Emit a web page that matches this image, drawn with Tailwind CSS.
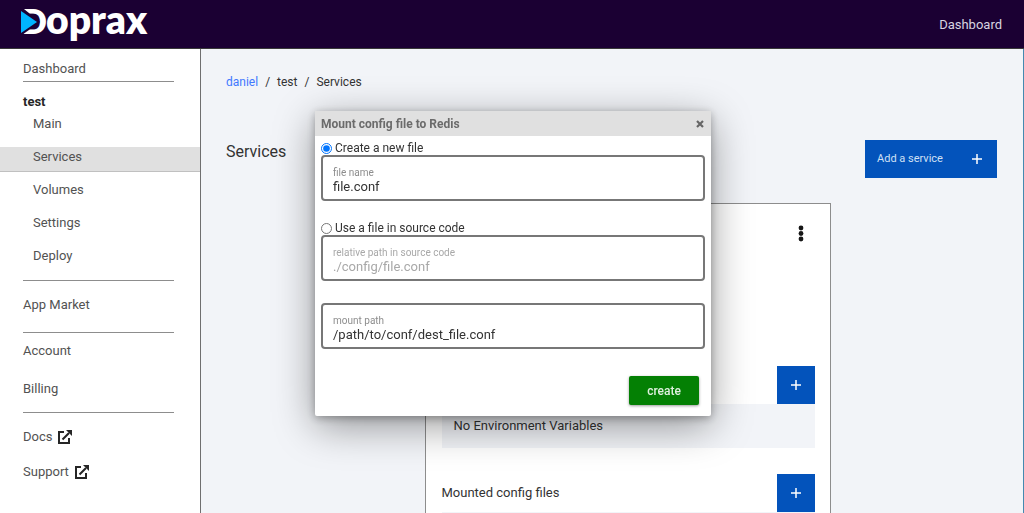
<!DOCTYPE html>
<html lang="en">

<head>
    <meta charset="UTF-8">
    <meta name="viewport" content="width=device-width, initial-scale=1.0">
    <title>Services - Doprax</title>
    <script src="https://cdn.jsdelivr.net/npm/@tailwindcss/browser@4"></script>
</head>

<body class="h-screen flex flex-col overflow-hidden bg-[#f2f4f8] font-[Roboto,sans-serif] text-[13px] text-[#333]">
    <!-- Header -->
    <header class="h-[49px] shrink-0 flex items-center justify-between bg-[#1b0033] border-b border-[#393939] pl-5 pr-[22px]">
        <a href="#" aria-label="Doprax">
            <svg class="w-36 h-12 overflow-visible" viewBox="0 0 144 48" fill="#fff" font-family="Lato, sans-serif" font-weight="800">
                <text x="1" y="34" font-size="34">D</text>
                <text x="26" y="34" font-size="39">oprax</text>
                <path d="M0 9v26h2l18-13L4 9z" fill="#1b0033" />
                <path d="M1 11v22l16-11z" fill="#00b4ff" />
            </svg>
        </a>
        <a href="#" class="mt-0.5 text-[#d8d4e0]">Dashboard</a>
    </header>

    <div class="flex flex-1 min-h-0">
        <!-- Sidebar -->
        <nav class="w-[201px] shrink-0 bg-white border-r border-[#6f6f6f] text-[#525252] leading-6">
            <a href="#" class="block mt-2 ml-[23px] mr-[26px] border-b border-[#8d8d8d]">Dashboard</a>
            <a href="#" class="block mt-2 px-[23px] font-bold text-[#262626]">test</a>
            <ul class="flex flex-col gap-2">
                <li><a href="#" class="block pl-[33px] h-[29px] -mt-1 pt-1 leading-5">Main</a></li>
                <li><a href="#" class="block pl-[33px] h-[25px] leading-5 bg-[#e0e0e0] border-b border-[#c0c0c0]">Services</a></li>
                <li><a href="#" class="block pl-[33px] h-[25px] leading-5">Volumes</a></li>
                <li><a href="#" class="block pl-[33px] h-[25px] leading-5">Settings</a></li>
                <li><a href="#" class="block pl-[33px] h-[25px] leading-5">Deploy</a></li>
            </ul>
            <div class="ml-[23px] mr-[26px]">
                <a href="#" class="block mt-[9px] py-3 border-t border-[#8d8d8d]">App Market</a>
                <div class="mt-[3px] pt-1.5 pb-[11px] border-y border-[#8d8d8d] flex flex-col gap-3.5">
                    <a href="#">Account</a>
                    <a href="#">Billing</a>
                </div>
                <div class="pt-3 flex flex-col gap-[11px]">
                    <a href="#" class="flex items-center gap-1.5">Docs
                        <svg class="size-3.5" viewBox="0 0 14 14" fill="none" stroke="#262626" stroke-width="2"><path d="M6 2H1v11h10V8M4.500 9.500L11 3" /><path d="M8 0h6v6z" fill="#262626" stroke="none" /></svg>
                    </a>
                    <a href="#" class="flex items-center gap-1.5">Support
                        <svg class="size-3.5" viewBox="0 0 14 14" fill="none" stroke="#262626" stroke-width="2"><path d="M6 2H1v11h10V8M4.500 9.500L11 3" /><path d="M8 0h6v6z" fill="#262626" stroke="none" /></svg>
                    </a>
                </div>
            </div>
        </nav>

        <!-- Main content -->
        <main class="flex-1 min-w-0 pl-[25px] pr-[26px] pt-[23px] border-r border-[#4589b0]">
            <div class="flex gap-[7px] text-xs leading-5">
                <a href="#" class="text-[#4178ff]">daniel</a><span>/</span><span>test</span><span>/</span><span>Services</span>
            </div>

            <div class="flex justify-between items-start mt-12">
                <h1 class="text-base leading-6">Services</h1>
                <button class="w-[132px] h-[38px] px-3 flex items-center justify-between bg-[#0353bb] text-[#d0e0f5] text-[11px]">
                    Add a service
                    <svg class="size-4" viewBox="0 0 16 16" stroke="#fff" stroke-width="1.500"><path d="M8 3v10M3 8h10" /></svg>
                </button>
            </div>

            <div class="flex justify-center pl-8 mt-[25px]">
                <section class="w-[406px] h-96 bg-white border border-[#8d8d8d] pl-4 pr-[15px]">
                    <div class="flex justify-end pt-5 h-[162px]">
                        <button aria-label="Service options" class="size-5 mr-1">
                            <svg class="size-5" viewBox="0 0 20 20" fill="#161616"><circle cx="10" cy="4" r="2.400" /><circle cx="10" cy="9.500" r="2.400" /><circle cx="10" cy="15" r="2.400" /></svg>
                        </button>
                    </div>
                    <div class="flex items-center justify-between">
                        <h2>Environment Variables</h2>
                        <button aria-label="Add environment variable" class="size-[38px] grid place-items-center bg-[#0353bb]">
                            <svg class="size-4" viewBox="0 0 16 16" stroke="#fff" stroke-width="1.500"><path d="M8 3v10M3 8h10" /></svg>
                        </button>
                    </div>
                    <p class="h-11 px-3 leading-[44px] bg-[#f2f4f8]">No Environment Variables</p>
                    <div class="flex items-center justify-between mt-[26px]">
                        <h2>Mounted config files</h2>
                        <button aria-label="Add config file" class="size-[38px] grid place-items-center bg-[#0353bb]">
                            <svg class="size-4" viewBox="0 0 16 16" stroke="#fff" stroke-width="1.500"><path d="M8 3v10M3 8h10" /></svg>
                        </button>
                    </div>
                    <div class="h-11 bg-[#f2f4f8]"></div>
                </section>
            </div>
        </main>
    </div>

    <!-- Mount config dialog -->
    <div class="fixed inset-x-0 top-[111px] pl-0.5 flex justify-center">
        <form role="dialog" aria-labelledby="dialogTitle" class="w-[396px] bg-white rounded-xs shadow-[0_10px_40px_rgba(0,0,0,0.4),0_2px_8px_rgba(0,0,0,0.3)]">
            <div class="h-[25px] px-1.5 flex items-center justify-between bg-[#e0e0e0] text-[#6b6b6b]">
                <h2 id="dialogTitle" class="text-xs font-bold">Mount config file to Redis</h2>
                <button type="button" aria-label="Close">
                    <svg class="size-2 mr-px" viewBox="0 0 8 8" stroke="#666" stroke-width="2.200"><path d="M1 1l6 6M7 1L1 7" /></svg>
                </button>
            </div>
            <div class="px-1.5 pt-[5px] pb-[11px]">
                <label class="flex items-center gap-[3px] h-3.5 text-xs leading-4"><input type="radio" name="source" checked class="size-[11px] accent-[#0075ff]">Create a new file</label>
                <label class="block h-[46px] px-2.5 pt-2 border-2 border-[#777] rounded text-[10px] leading-4 text-[#8d8d8d]">file name
                    <input type="text" value="file.conf" class="block w-full h-4 -mt-0.5 text-[13px] leading-4 text-[#333] outline-none">
                </label>
                <label class="flex items-center gap-[3px] h-3.5 mt-5 text-xs leading-4"><input type="radio" name="source" class="size-[11px]">Use a file in source code</label>
                <label class="block h-[46px] px-2.5 pt-2 border-2 border-[#777] rounded text-[10px] leading-4 text-[#a8a8a8]">relative path in source code
                    <input type="text" placeholder="./config/file.conf" class="block w-full h-4 -mt-0.5 text-[13px] leading-4 placeholder:text-[#a8a8a8] outline-none">
                </label>
                <label class="block h-[46px] mt-[22px] px-2.5 pt-2 border-2 border-[#777] rounded text-[10px] leading-4 text-[#8d8d8d]">mount path
                    <input type="text" value="/path/to/conf/dest_file.conf" class="block w-full h-4 -mt-0.5 text-[13px] leading-4 text-[#333] outline-none">
                </label>
                <div class="flex justify-end mt-[27px] pr-1.5">
                    <button type="submit" class="w-[70px] h-[29px] rounded-xs bg-[#048004] text-[#dff0df] text-xs font-medium shadow-[0_1px_3px_rgba(0,0,0,0.4)]">create</button>
                </div>
            </div>
        </form>
    </div>
</body>

</html>
